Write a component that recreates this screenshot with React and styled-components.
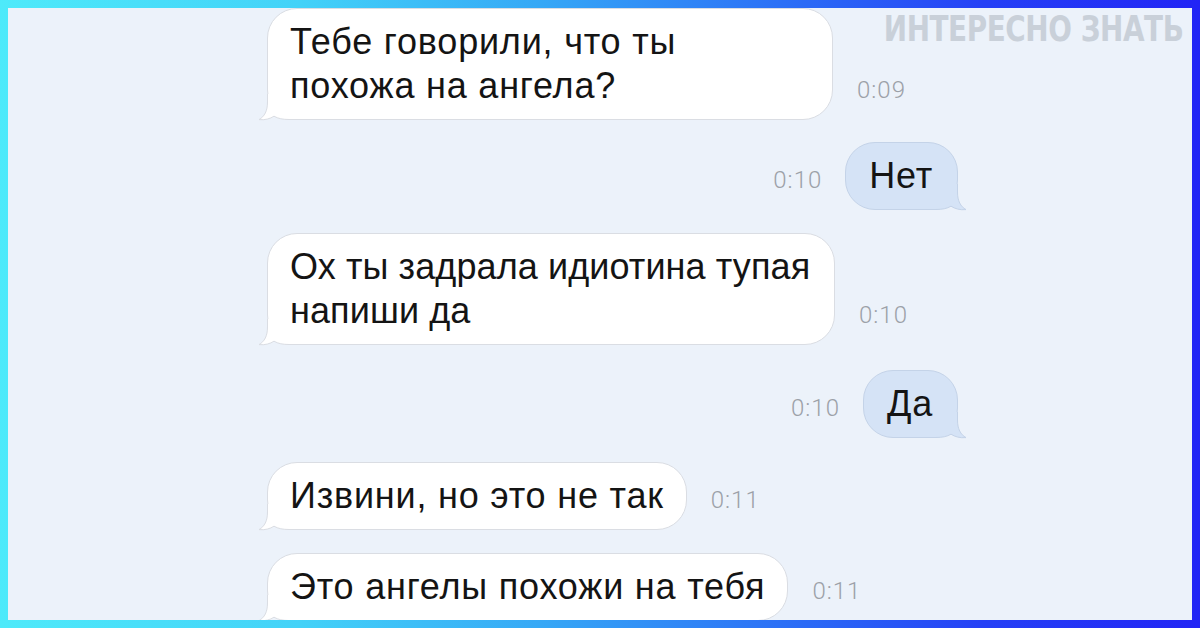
import React from "react";
import styled, { createGlobalStyle } from "styled-components";

const Global = createGlobalStyle`
  html, body { margin: 0; padding: 0; }
  body { width: 1200px; height: 628px; overflow: hidden; }
  * { box-sizing: border-box; }
`;

const Frame = styled.div`
  width: 1200px;
  height: 628px;
  padding: 8px;
  background: linear-gradient(90deg, #4eeafa 0%, #43d2f8 25%, #36a8f6 45%, #2c70f6 65%, #2540f6 82%, #2224f5 100%);
`;

const Screen = styled.div`
  position: relative;
  width: 1184px;
  height: 612px;
  overflow: hidden;
  background: #ecf2fa;
  padding: 0 0 0 259px;
`;

const Watermark = styled.div`
  position: absolute;
  top: 0;
  right: 9px;
  font-family: "DejaVu Sans", sans-serif;
  font-stretch: condensed;
  font-weight: 700;
  font-size: 36px;
  line-height: 42px;
  letter-spacing: -0.5px;
  color: #c9d0d9;
  transform: scaleX(0.86);
  transform-origin: right center;
  white-space: nowrap;
`;

const Chat = styled.div`
  width: 712px;
  display: flex;
  flex-direction: column;
`;

const Row = styled.div`
  display: flex;
  align-items: flex-end;
  justify-content: flex-start;
  flex-direction: ${(p) => (p.$out ? "row-reverse" : "row")};
  gap: ${(p) => (p.$out ? "23px" : "24px")};
  margin-top: ${(p) => p.$mt}px;
  padding-right: ${(p) => (p.$out ? "21px" : "0")};
`;

const Bubble = styled.div`
  position: relative;
  flex: none;
  width: ${(p) => (p.$w ? `${p.$w}px` : "auto")};
  padding: 11px ${(p) => (p.$out ? "24px" : "22px")} 11px ${(p) => (p.$out ? "23px" : "22px")};
  border-radius: 30px;
  border: 1px solid ${(p) => (p.$out ? "#c4d3e8" : "#dadde3")};
  background: ${(p) => (p.$out ? "#d5e3f6" : "#ffffff")};
  font-family: "Liberation Sans", Arial, sans-serif;
  font-size: 36px;
  letter-spacing: ${(p) => (p.$tight ? "0.1px" : "0.8px")};
  line-height: 44px;
  color: #141414;
  white-space: nowrap;
`;

const BubbleText = styled.span`
  position: relative;
  z-index: 1;
`;

const TailSvg = styled.svg`
  position: absolute;
  z-index: 0;
  bottom: -1px;
  ${(p) => (p.$out ? "right: -9px; transform: scaleX(-1);" : "left: -9px;")}
  width: 40px;
  height: 26px;
  overflow: visible;
`;

const Time = styled.div`
  flex: none;
  font-family: Roboto, "Liberation Sans", sans-serif;
  font-weight: 300;
  font-size: 24px;
  letter-spacing: 1px;
  line-height: 26px;
  color: #9ca1a8;
  margin-bottom: 17px;
`;

function Tail({ out }) {
  const fill = out ? "#d5e3f6" : "#ffffff";
  const stroke = out ? "#c4d3e8" : "#dadde3";
  return (
    <TailSvg $out={out} viewBox="0 0 40 26" aria-hidden="true">
      <path
        d="M8.5 0 L8.5 8 C8.5 17 5.5 22.5 0 25.6 C6 26.2 11 24.8 15 22.2 C19 24.6 24 25.5 30 25.5 L40 25.5 L40 0 Z"
        fill={fill}
      />
      <path
        d="M8.5 0 L8.5 8 C8.5 17 5.5 22.5 0 25.6 C6 26.2 11 24.8 15 22.2 C19 24.6 24 25.5 30 25.5 L40 25.5"
        fill="none"
        stroke={stroke}
        strokeWidth="1"
      />
    </TailSvg>
  );
}

const messages = [
  { out: false, lines: ["Тебе говорили, что ты", "похожа на ангела?"], time: "0:09", w: 566, mt: 0 },
  { out: true, lines: ["Нет"], time: "0:10", mt: 22 },
  { out: false, lines: ["Ох ты задрала идиотина тупая", "напиши да"], time: "0:10", w: 568, mt: 23, tight: true },
  { out: true, lines: ["Да"], time: "0:10", mt: 25 },
  { out: false, lines: ["Извини, но это не так"], time: "0:11", mt: 24 },
  { out: false, lines: ["Это ангелы похожи на тебя"], time: "0:11", mt: 23 },
];

export default function App() {
  return (
    <>
      <Global />
      <Frame>
        <Screen>
          <Chat>
            {messages.map((m, i) => (
              <Row key={i} $out={m.out} $mt={m.mt}>
                <Bubble $out={m.out} $w={m.w} $tight={m.tight}>
                  <Tail out={m.out} />
                  <BubbleText>
                    {m.lines.map((l, j) => (
                      <React.Fragment key={j}>
                        {j > 0 && <br />}
                        {l}
                      </React.Fragment>
                    ))}
                  </BubbleText>
                </Bubble>
                <Time>{m.time}</Time>
              </Row>
            ))}
          </Chat>
          <Watermark>ИНТЕРЕСНО ЗНАТЬ</Watermark>
        </Screen>
      </Frame>
    </>
  );
}
